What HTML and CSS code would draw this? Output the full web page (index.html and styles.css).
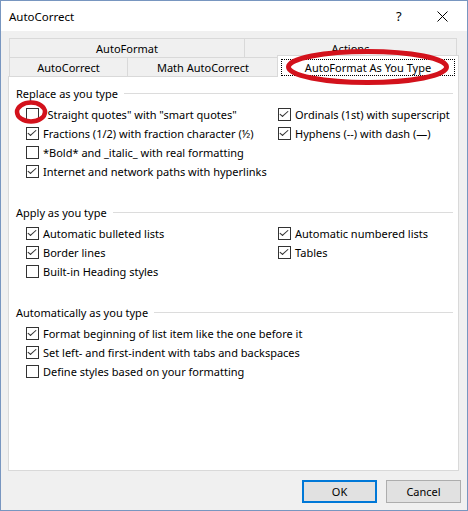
FILE: index.html
```
<!DOCTYPE html>
<html>
<head>
<meta charset="utf-8">
<link rel="stylesheet" href="styles.css">
</head>
<body>
<div class="window">
  <div class="titlebar">
    <span class="title">AutoCorrect</span>
    <span class="help">?</span>
    <svg class="close" width="11" height="11" viewBox="0 0 11 11"><path d="M0.5 0.5L10.5 10.5M10.5 0.5L0.5 10.5" stroke="#000" stroke-width="1" fill="none"/></svg>
  </div>
  <div class="tabs">
    <div class="tabrow back">
      <div class="tab">AutoFormat</div>
      <div class="tab">Actions</div>
    </div>
    <div class="tabrow front">
      <div class="tab">AutoCorrect</div>
      <div class="tab">Math AutoCorrect</div>
      <div class="tab selected"><span class="focus">AutoFormat As You Type</span></div>
    </div>
  </div>
  <div class="panel">
    <div class="group">
      <div class="legend"><span>Replace as you type</span></div>
      <div class="opts">
        <div class="opt"><span class="cb"></span><span>"Straight quotes" with "smart quotes"</span></div>
        <div class="opt"><span class="cb on"></span><span>Ordinals (1st) with superscript</span></div>
        <div class="opt"><span class="cb on"></span><span>Fractions (1/2) with fraction character (½)</span></div>
        <div class="opt"><span class="cb on"></span><span>Hyphens (--) with dash (—)</span></div>
        <div class="opt full"><span class="cb"></span><span>*Bold* and _italic_ with real formatting</span></div>
        <div class="opt full"><span class="cb on"></span><span>Internet and network paths with hyperlinks</span></div>
      </div>
    </div>
    <div class="group">
      <div class="legend"><span>Apply as you type</span></div>
      <div class="opts">
        <div class="opt"><span class="cb on"></span><span>Automatic bulleted lists</span></div>
        <div class="opt"><span class="cb on"></span><span>Automatic numbered lists</span></div>
        <div class="opt"><span class="cb on"></span><span>Border lines</span></div>
        <div class="opt"><span class="cb on"></span><span>Tables</span></div>
        <div class="opt full"><span class="cb"></span><span>Built-in Heading styles</span></div>
      </div>
    </div>
    <div class="group">
      <div class="legend"><span>Automatically as you type</span></div>
      <div class="opts">
        <div class="opt full"><span class="cb on"></span><span>Format beginning of list item like the one before it</span></div>
        <div class="opt full"><span class="cb on"></span><span>Set left- and first-indent with tabs and backspaces</span></div>
        <div class="opt full"><span class="cb"></span><span>Define styles based on your formatting</span></div>
      </div>
    </div>
  </div>
  <div class="buttons">
    <div class="btn default">OK</div>
    <div class="btn">Cancel</div>
  </div>
  <svg class="marks" width="468" height="511" viewBox="0 0 468 511">
    <ellipse cx="367.5" cy="67" rx="79" ry="15.5" fill="none" stroke="#d3121c" stroke-width="5"/>
    <ellipse cx="31" cy="112" rx="14" ry="9.5" fill="none" stroke="#d3121c" stroke-width="4.5"/>
  </svg>
</div>
</body>
</html>
```
FILE: styles.css
```
html, body {
  margin: 0;
  padding: 0;
  background: #fff;
}
.window {
  position: relative;
  width: 468px;
  height: 511px;
  box-sizing: border-box;
  border: 1px solid #7896c0;
  background: #f0f0f0;
  font-family: "Noto Sans", "Liberation Sans", sans-serif;
  font-size: 11px;
  color: #000;
  display: flex;
  flex-direction: column;
}
.titlebar {
  height: 30px;
  background: #fff;
  display: flex;
  align-items: center;
  padding-left: 8px;
  flex-shrink: 0;
}
.title {
  flex: 1;
  font-size: 11.5px;
}
.help {
  font-size: 13px;
  width: 41px;
  margin-right: 0;
}
.close {
  margin-right: 19px;
}
.tabs {
  margin: 7px 10px 0 8px;
  display: flex;
  flex-direction: column;
}
.tabrow {
  display: grid;
  height: 19px;
}
.back {
  grid-template-columns: 236px 1fr;
}
.front {
  grid-template-columns: 119px 151px 1fr;
}
.tab {
  border: 1px solid #d9d9d9;
  border-bottom: 0;
  display: flex;
  align-items: center;
  justify-content: center;
  background: #f0f0f0;
  padding-top: 1px;
}
.tab + .tab {
  border-left: 0;
}
.tab.selected {
  position: relative;
  z-index: 2;
  background: #fff;
  border-left: 1px solid #d9d9d9;
  margin: -2px -2px -1px -2px;
  padding: 3px 3px 1px 3px;
  align-items: stretch;
}
.focus {
  flex: 1;
  border: 1px dotted #000;
  display: flex;
  align-items: center;
  justify-content: center;
}
.panel {
  height: 395px;
  box-sizing: border-box;
  margin: 0 8px 0 7px;
  background: #fff;
  border: 1px solid #d9d9d9;
  padding: 8px 5px 0 7px;
  flex-shrink: 0;
}
.group {
  margin-bottom: 23px;
}
.legend {
  display: flex;
  align-items: center;
  height: 16px;
  gap: 6px;
}
.legend::after {
  content: "";
  flex: 1;
  height: 1px;
  background: #dcdcdc;
}
.opts {
  display: grid;
  grid-template-columns: 252px 1fr;
  grid-auto-rows: 19px;
  padding-left: 10px;
  margin-top: 4px;
}
.opt {
  display: flex;
  align-items: center;
  gap: 4px;
  white-space: nowrap;
}
.opt.full {
  grid-column: 1 / -1;
}
.cb {
  width: 13px;
  height: 13px;
  box-sizing: border-box;
  border: 1px solid #333;
  background: #fff;
  flex-shrink: 0;
  position: relative;
}
.cb.on::after {
  content: "";
  position: absolute;
  left: 3px;
  top: 0px;
  width: 3px;
  height: 7px;
  border: solid #333;
  border-width: 0 1px 1px 0;
  transform: rotate(40deg) skewX(-8deg);
}
.buttons {
  display: flex;
  justify-content: flex-end;
  gap: 9px;
  margin: 9px 6px 0 0;
}
.btn {
  width: 75px;
  height: 23px;
  box-sizing: border-box;
  background: #e1e1e1;
  border: 1px solid #adadad;
  display: flex;
  align-items: center;
  justify-content: center;
}
.btn.default {
  border: 2px solid #0078d7;
}
.marks {
  position: absolute;
  left: -1px;
  top: -1px;
  z-index: 10;
  pointer-events: none;
}
```
